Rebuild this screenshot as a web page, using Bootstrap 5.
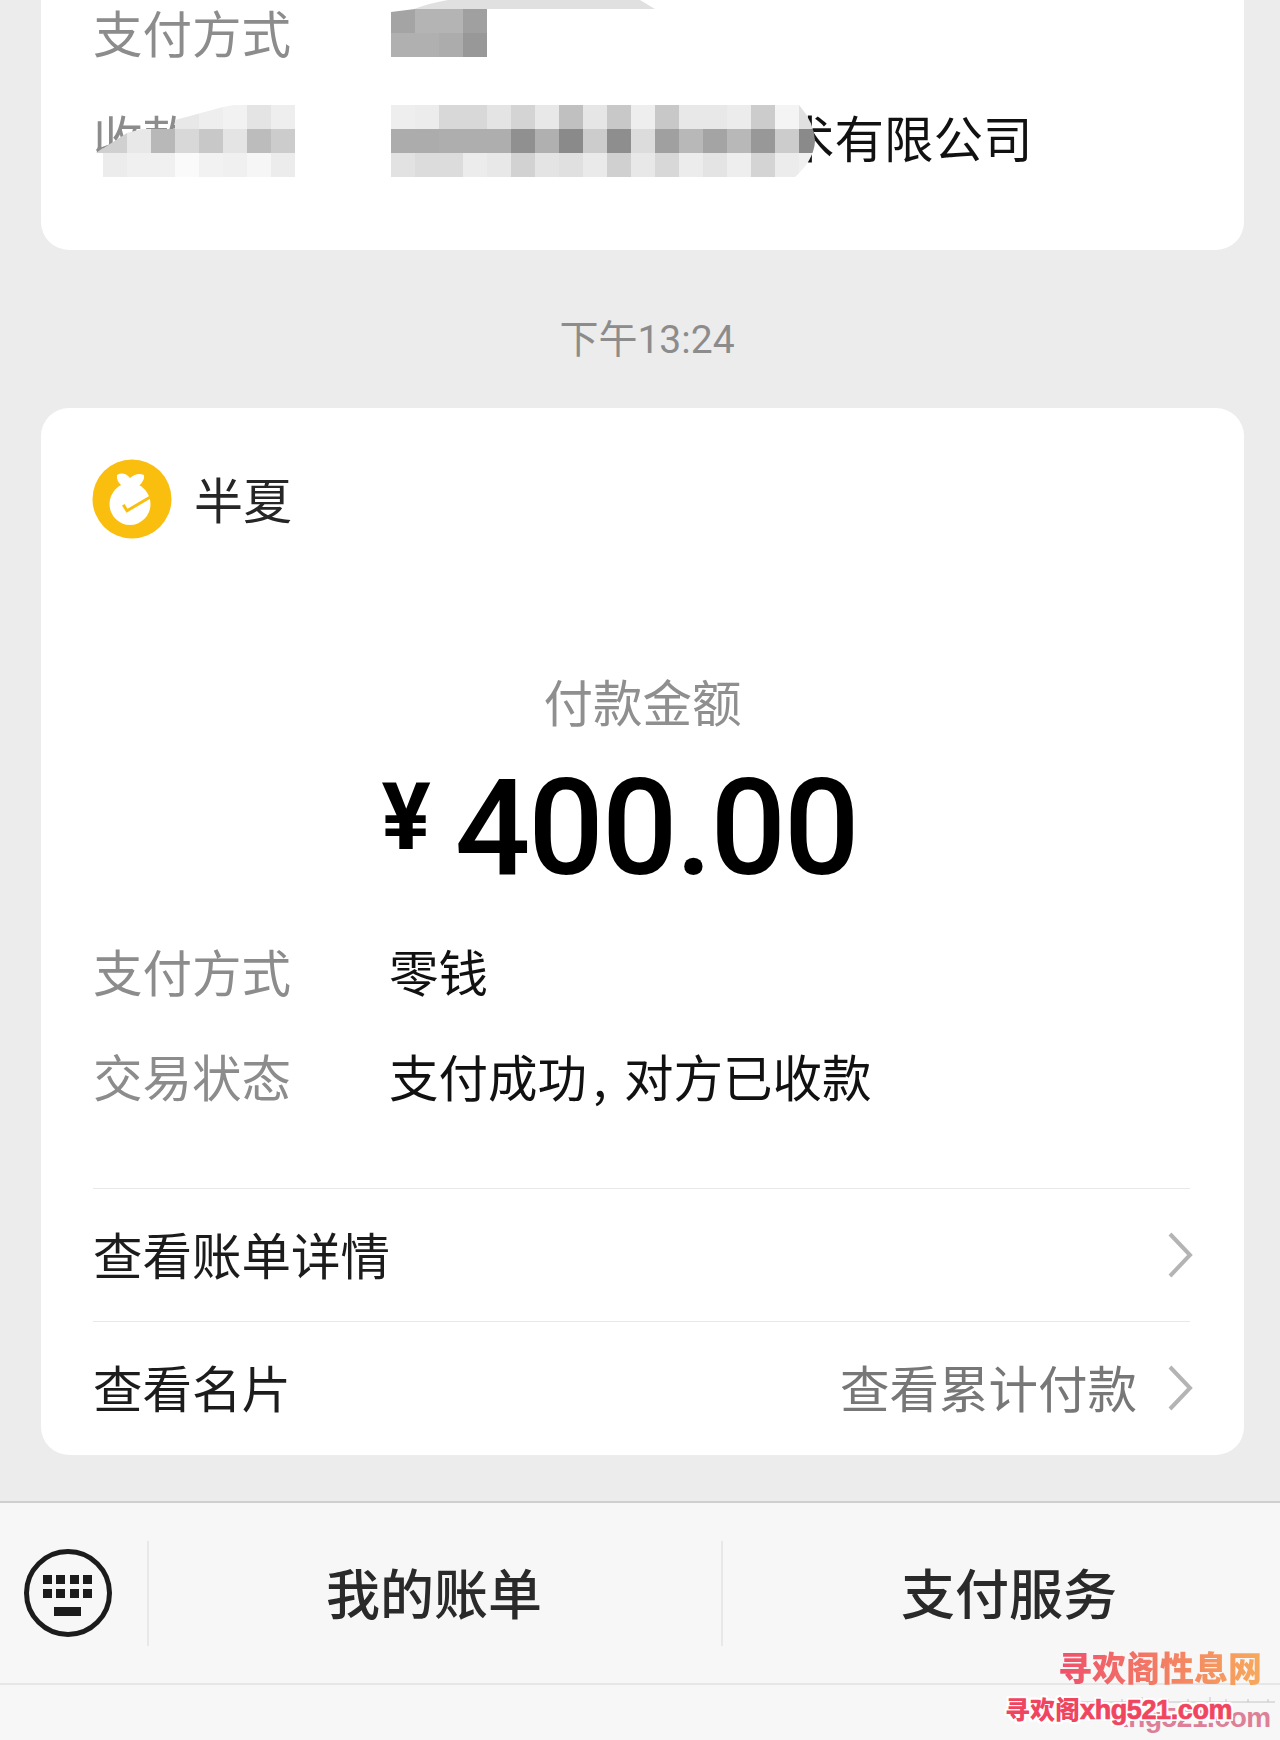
<!DOCTYPE html>
<html lang="zh-CN">
<head>
    <meta charset="UTF-8">
    <meta name="viewport" content="width=device-width, initial-scale=1.0">
    <title>支付凭证</title>
    <link href="https://cdn.jsdelivr.net/npm/bootstrap@5.3.0/dist/css/bootstrap.min.css" rel="stylesheet">
    <style>
        body {
            background: #ececec;
            font-family: "Noto Sans CJK SC", "Liberation Sans", sans-serif;
            width: 1280px;
            height: 1740px;
            overflow: hidden;
        }
        .page-wrap { width: 1280px; height: 1740px; }
        .msg-card { width: 1203px; margin-left: 41px; background: #fff; border: 0; border-radius: 28px; }
        .msg-top { height: 250px; border-radius: 0 0 28px 28px; padding: 5px 52px 0; }
        .msg-main { height: 1047px; margin-top: 43px; padding: 52px 52px 0; }
        .info-row { height: 60px; line-height: 54px; font-size: 49.5px; }
        .info-row + .info-row { margin-top: 45px; }
        .info-label { width: 296px; color: #8c8c8c; flex: none; }
        .info-value { color: #111; white-space: nowrap; }
        .lead-gap { padding-left: 396px; }
        .latin-comma { display: inline-block; width: 37px; padding-left: 6px; }
        .mosaic-layer { position: absolute; left: 0; top: 0; }
        .time-stamp { height: 50px; line-height: 50px; margin-top: 65px; font-family: Roboto, "Noto Sans CJK SC", sans-serif; font-size: 39px; color: #8c8c8c; padding-left: 14px; }
        .payer-logo { width: 80px; height: 80px; margin-left: -1px; margin-top: -1px; }
        .payer-name { font-size: 49px; color: #262626; margin-left: 22px; line-height: 70px; margin-bottom: 4px; }
        .amount-title { height: 60px; line-height: 56px; margin-top: 134px; font-size: 49.5px; color: #8f8f8f; text-align: center; }
        .amount-row { height: 130px; margin-top: 28px; padding-right: 46px; font-family: Roboto, "Liberation Sans", sans-serif; color: #000; line-height: 130px; }
        .amount-yen { font-size: 92px; font-weight: 700; margin-right: 24px; line-height: 130px; position: relative; top: -8px; }
        .amount-num { font-size: 133px; font-weight: 500; letter-spacing: -2px; position: relative; top: 3px; }
        .detail-rows { margin-top: 53px; }
        .link-list { margin-top: 79px; width: 1097px; }
        .link-row { height: 133px; padding-bottom: 2px; border-top: 1.5px solid #e8e8e8; font-size: 49.5px; color: #1c1c1c; }
        .link-side { color: #777; margin-right: 30px; }
        .chevron-icon { width: 26px; height: 46px; margin-right: -3px; margin-top: 2px; }
        .bottom-bar { height: 182px; margin-top: 46px; background: #f7f7f7; border-top: 2px solid #cfcfcf; }
        .kbd-cell { width: 147px; flex: none; padding-left: 22px; }
        .bar-btn { height: 105px; padding-bottom: 4px; border-left: 2px solid #e8e8e8; font-size: 54px; color: #2a2a2a; font-weight: 500; }
        .bar-first { width: 574px; flex: none; padding-right: 2px; }
        .bar-last { padding-left: 15px; }
        .bottom-strip { height: 57px; background: #f7f7f7; border-top: 2px solid #e6e6e6; }
        .watermark { position: absolute; left: 0; top: 0; width: 1280px; height: 1740px; pointer-events: none; }
        .mark-ruler { position: absolute; left: 1070px; top: 1697px; }
        .mark-title {
            position: absolute; left: 1058px; top: 1644px; font-size: 34px; line-height: 46px; font-weight: 900; white-space: nowrap;
            background: linear-gradient(90deg, #ef4f6c, #f7aa5c);
            -webkit-background-clip: text; background-clip: text; color: transparent;
        }
        .mark-shadow {
            position: absolute; left: 1113px; top: 1700px; font-family: "Liberation Sans", sans-serif; font-size: 28px; line-height: 36px;
            font-weight: 700; color: #dd7f97; white-space: nowrap; letter-spacing: -0.4px;
        }
        .mark-site {
            position: absolute; left: 1005px; top: 1690px; font-size: 25px; line-height: 36px; font-weight: 900; color: #f0455f; white-space: nowrap;
            text-shadow: 2px 0 #fff, -2px 0 #fff, 0 2px #fff, 0 -2px #fff, 2px 2px #fff, -2px -2px #fff, 2px -2px #fff, -2px 2px #fff;
        }
        .mark-site b { font-family: "Liberation Sans", sans-serif; font-size: 27px; letter-spacing: -0.4px; -webkit-text-stroke: 0.7px #f0455f; }
    </style>
</head>
<body class="position-relative">
    <div class="page-wrap d-flex flex-column">
        <div class="card msg-card msg-top position-relative">
            <div class="info-row d-flex"><div class="info-label">支付方式</div><div class="info-value"></div></div>
            <div class="info-row d-flex"><div class="info-label">收款方</div><div class="info-value lead-gap">术有限公司</div></div>
        </div>
        <svg class="mosaic-layer" id="mosaicLayer" width="1280" height="250" viewBox="0 0 1280 250">
            <defs>
                <clipPath id="clipLabel"><path d="M96 153L127 133L223 107L234 105H295V177H103V153Z"/></clipPath>
                <clipPath id="clipValue"><path d="M391 105H799Q814 122 815 141Q814 160 795 177H391Z"/></clipPath>
                <clipPath id="clipTop"><path d="M391 12L415 9H487V57H391Z"/></clipPath>
            </defs>
            <path d="M414 9Q430 3 448 0H640L655 9Z" fill="#e0e0e0"/>
            <path d="M96 153L103 148V153Z" fill="#d0d0d0"/>
        </svg>

        <div class="time-stamp text-center">下午13:24</div>

        <div class="card msg-card msg-main">
            <div class="d-flex align-items-center">
                <svg class="payer-logo" viewBox="0 0 80 80">
                    <circle cx="40" cy="40" r="39.5" fill="#fabe0f"/>
                    <path d="M25 16Q32 12 38 19Q45 13 52 16Q53 21 47 27L45 30H32L30 27Q24 22 25 16Z" fill="#fff"/>
                    <ellipse cx="38" cy="45" rx="20.5" ry="21" fill="#fff"/>
                    <path d="M31.3 45.7L35 51.7L60 37" fill="none" stroke="#fabe0f" stroke-width="3"/>
                </svg>
                <div class="payer-name">半夏</div>
            </div>
            <div class="amount-title">付款金额</div>
            <div class="amount-row d-flex justify-content-center">
                <span class="amount-yen">¥</span><span class="amount-num">400.00</span>
            </div>
            <div class="detail-rows">
                <div class="info-row d-flex"><div class="info-label">支付方式</div><div class="info-value">零钱</div></div>
                <div class="info-row d-flex"><div class="info-label">交易状态</div><div class="info-value">支付成功<span class="latin-comma">,</span>对方已收款</div></div>
            </div>
            <div class="link-list">
                <div class="link-row d-flex align-items-center justify-content-between">
                    <span>查看账单详情</span>
                    <svg class="chevron-icon" viewBox="0 0 26 46"><path d="M3 2L23 23L3 44" fill="none" stroke="#b4b4b4" stroke-width="4"/></svg>
                </div>
                <div class="link-row d-flex align-items-center justify-content-between">
                    <span>查看名片</span>
                    <div class="d-flex align-items-center">
                        <span class="link-side">查看累计付款</span>
                        <svg class="chevron-icon" viewBox="0 0 26 46"><path d="M3 2L23 23L3 44" fill="none" stroke="#b4b4b4" stroke-width="4"/></svg>
                    </div>
                </div>
            </div>
        </div>

        <div class="bottom-bar d-flex align-items-center">
            <div class="kbd-cell">
                <svg width="92" height="92" viewBox="0 0 92 92" class="d-block">
                    <circle cx="46" cy="46" r="41.5" fill="none" stroke="#1c1c1c" stroke-width="5"/>
                    <g fill="#1c1c1c">
                        <rect x="21" y="28" width="9" height="9"/><rect x="34" y="28" width="9" height="9"/><rect x="48" y="28" width="9" height="9"/><rect x="61" y="28" width="9" height="9"/>
                        <rect x="21" y="42" width="9" height="9"/><rect x="34" y="42" width="9" height="9"/><rect x="48" y="42" width="9" height="9"/><rect x="61" y="42" width="9" height="9"/>
                        <rect x="32" y="60" width="27" height="9"/>
                    </g>
                </svg>
            </div>
            <div class="bar-btn bar-first d-flex align-items-center justify-content-center">我的账单</div>
            <div class="bar-btn bar-last flex-grow-1 d-flex align-items-center justify-content-center">支付服务</div>
        </div>
        <div class="bottom-strip"></div>
    </div>

    <div class="watermark">
        <svg class="mark-ruler" width="210" height="8" viewBox="0 0 210 8">
            <path d="M0 5H205M8 2V5M28 2V5M52 2V5M72 0V5M98 2V5M118 2V5M140 0V5M156 2V5M178 2V5M198 2V5" stroke="#c4c4c4" fill="none"/>
        </svg>
        <div class="mark-shadow">xhg521.com</div>
        <div class="mark-title">寻欢阁性息网</div>
        <div class="mark-site">寻欢阁<b>xhg521.com</b></div>
    </div>

    <script src="https://cdn.jsdelivr.net/npm/bootstrap@5.3.0/dist/js/bootstrap.bundle.min.js"></script>
    <script>
        // pixelated cover blocks, grey values read off the picture
        const blocks = [
            { x: 391, y: 9, clip: 'clipTop', rows: [
                ['a4', 'b4', 'b4', 'a0'],
                ['b0', 'b0', 'ac', '98']
            ]},
            { x: 103, y: 105, clip: 'clipLabel', rows: [
                [null, null, null, 'e8', 'ee', 'f2', 'e4', 'ee'],
                ['d0', 'e8', 'b8', 'd8', 'c8', 'e4', 'bc', 'cc'],
                ['ec', 'f0', 'f0', 'fa', 'f2', 'f0', 'f6', 'ec']
            ]},
            { x: 391, y: 105, clip: 'clipValue', rows: [
                ['ee', 'ec', 'd8', 'd8', 'e4', 'd4', 'e8', 'c0', 'e6', 'c8', 'ee', 'c8', 'e8', 'e8', 'ec', 'cc', 'f4', 'e0'],
                ['ac', 'ac', 'ae', 'ae', 'ae', '90', 'b0', '8a', 'cc', '8e', 'dc', 'a0', 'b8', 'a4', 'b8', '98', 'cc', '8a'],
                ['e2', 'dc', 'dc', 'ec', 'e8', 'd2', 'e4', 'e0', 'ea', 'd0', 'e8', 'd8', 'ec', 'e4', 'ee', 'd4', 'ec', 'f0']
            ]}
        ];
        const layer = document.getElementById('mosaicLayer');
        blocks.forEach(block => {
            const group = document.createElementNS('http://www.w3.org/2000/svg', 'g');
            group.setAttribute('clip-path', 'url(#' + block.clip + ')');
            block.rows.forEach((row, r) => {
                row.forEach((grey, c) => {
                    if (!grey) return;
                    const rect = document.createElementNS('http://www.w3.org/2000/svg', 'rect');
                    rect.setAttribute('x', block.x + c * 24);
                    rect.setAttribute('y', block.y + r * 24);
                    rect.setAttribute('width', 24);
                    rect.setAttribute('height', 24);
                    rect.setAttribute('fill', '#' + grey + grey + grey);
                    group.appendChild(rect);
                });
            });
            layer.appendChild(group);
        });
    </script>
</body>
</html>
